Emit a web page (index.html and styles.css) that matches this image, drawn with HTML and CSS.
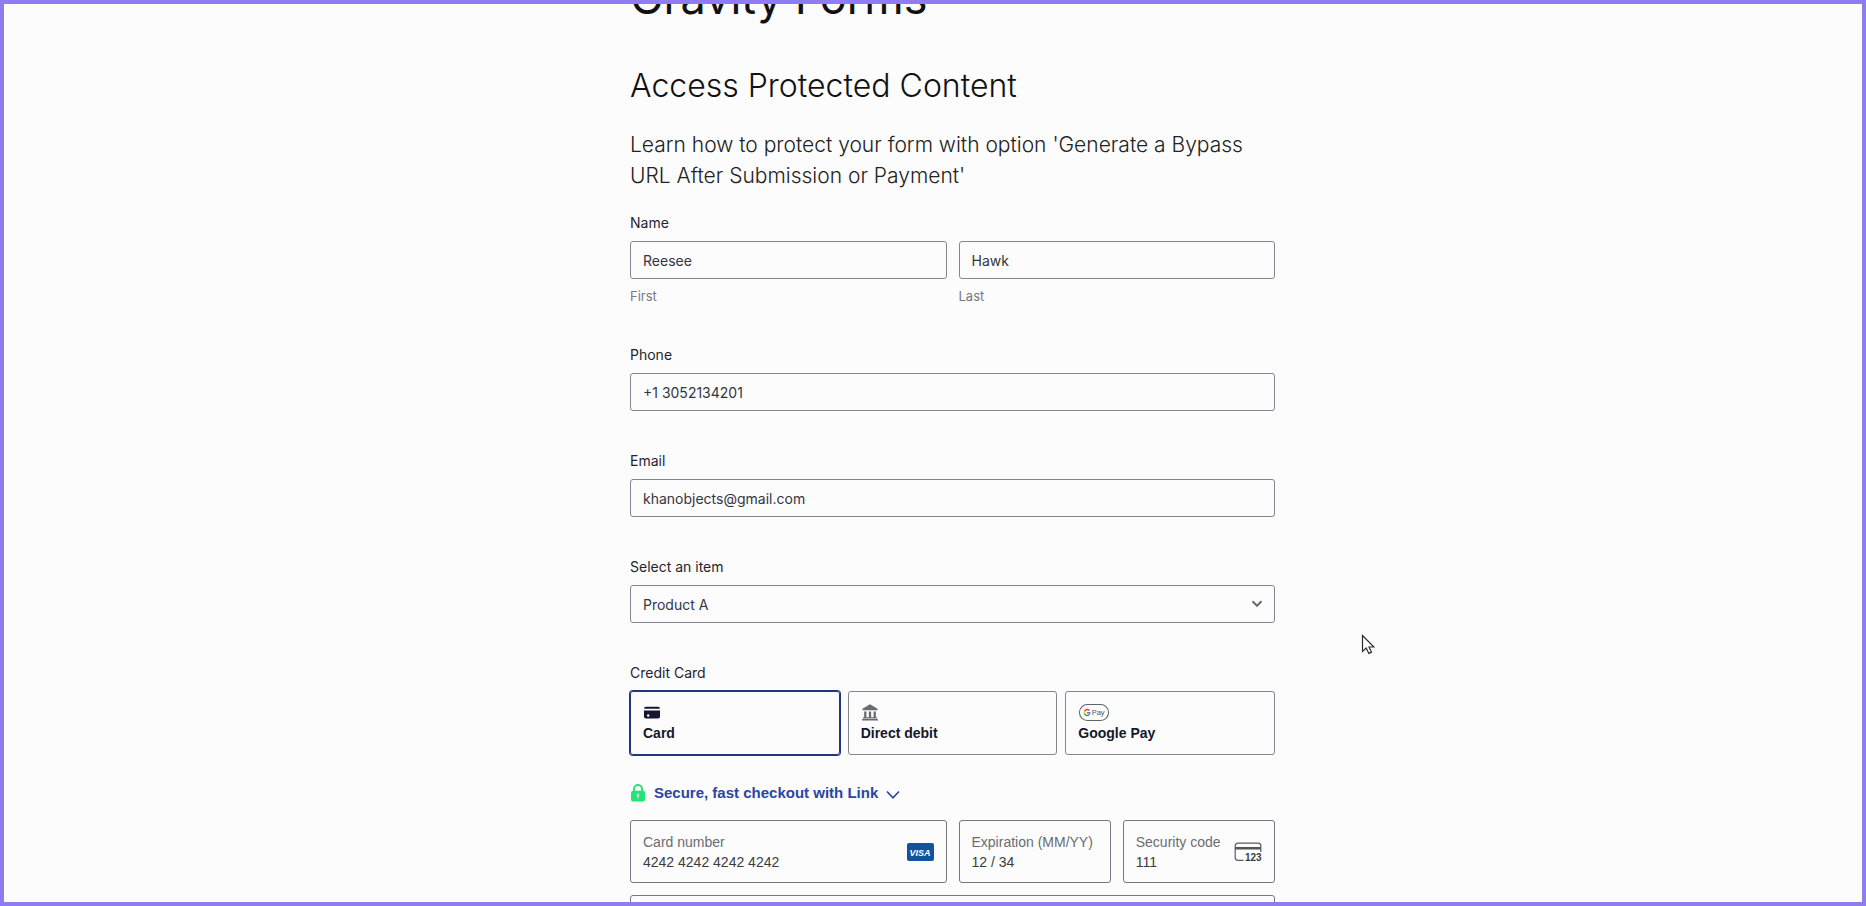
FILE: index.html
```
<!DOCTYPE html>
<html lang="en">

<head>
    <meta charset="UTF-8">
    <title>Gravity Forms</title>
    <link rel="stylesheet" href="styles.css">
</head>

<body>
    <div class="frame">
        <main class="content">
            <h1 class="page-title">Gravity Forms</h1>
            <form class="form">
                <h2 class="form-title">Access Protected Content</h2>
                <p class="form-desc">Learn how to protect your form with option 'Generate a Bypass URL After Submission or Payment'</p>

                <fieldset class="field">
                    <legend class="label">Name</legend>
                    <div class="name-row">
                        <div class="name-col">
                            <input class="control" id="first" type="text" value="Reesee">
                            <label class="sub-label" for="first">First</label>
                        </div>
                        <div class="name-col">
                            <input class="control" id="last" type="text" value="Hawk">
                            <label class="sub-label" for="last">Last</label>
                        </div>
                    </div>
                </fieldset>

                <div class="field">
                    <label class="label" for="phone">Phone</label>
                    <input class="control" id="phone" type="tel" value="+1 3052134201">
                </div>

                <div class="field">
                    <label class="label" for="email">Email</label>
                    <input class="control" id="email" type="email" value="khanobjects@gmail.com">
                </div>

                <div class="field">
                    <label class="label" for="item">Select an item</label>
                    <div class="select-wrap">
                        <select class="control" id="item">
                            <option>Product A</option>
                        </select>
                        <svg class="select-arrow" width="12" height="8" viewBox="0 0 12 8"><path d="M1.5 1.2 6 5.8l4.500-4.600" fill="none" stroke="#6a6c72" stroke-width="2"/></svg>
                    </div>
                </div>

                <fieldset class="field">
                    <legend class="label">Credit Card</legend>
                    <div class="methods">
                        <label class="method method-current">
                            <input class="method-radio" type="radio" name="method" checked>
                            <svg class="method-icon" width="18" height="18" viewBox="0 0 18 18">
                                <path d="M2.500 3h13A1.800 1.800 0 0 1 17.300 5H.7a1.800 1.800 0 0 1 1.800-2z" fill="#15172f"/>
                                <path d="M.5 7h17v6.200a2.200 2.200 0 0 1-2.200 2.200H2.700A2.200 2.200 0 0 1 .5 13.200z" fill="#15172f"/>
                                <circle cx="5" cy="12.200" r="1.300" fill="#fff"/>
                            </svg>
                            <span>Card</span>
                        </label>
                        <label class="method">
                            <input class="method-radio" type="radio" name="method">
                            <svg class="method-icon" width="18" height="18" viewBox="0 0 18 18" fill="#6a6c72">
                                <path d="M9 .3 17 5v1.600H1V5zM2.800 8h2.400v6.600H2.800zM7.800 8h2.400v6.600H7.800zM12.800 8h2.400v6.600h-2.400zM1.600 14h14.800v1.400H1.600zM.6 15.800h16.800v1.800H.6z"/>
                            </svg>
                            <span>Direct debit</span>
                        </label>
                        <label class="method">
                            <input class="method-radio" type="radio" name="method">
                            <svg class="method-icon" width="32" height="18" viewBox="0 0 32 18">
                                <rect x=".6" y=".6" width="30.800" height="16.800" rx="8.400" fill="#fff" stroke="#5f6368" stroke-width="1.100"/>
                                <g fill="none" stroke-width="1.500">
                                    <path d="M11 6.800A3 3 0 0 0 6 7.500" stroke="#ea4335"/>
                                    <path d="M6 7.500a3 3 0 0 0 0 3" stroke="#fbbc04"/>
                                    <path d="M6 10.500a3 3 0 0 0 4.600 1" stroke="#34a853"/>
                                    <path d="M10.600 11.500a3 3 0 0 0 .9-2.300H8.600" stroke="#4285f4"/>
                                </g>
                                <text class="gpay-text" x="13.500" y="12">Pay</text>
                            </svg>
                            <span>Google Pay</span>
                        </label>
                    </div>

                    <button class="link-btn" type="button">
                        <svg width="16" height="18" viewBox="0 0 16 18">
                            <path d="M4 8V5a4 4 0 0 1 8 0v3" fill="none" stroke="#33dd80" stroke-width="2"/>
                            <rect x="1" y="6.800" width="14" height="10.600" rx="2" fill="#22e477"/>
                            <path d="M8 9.500a1.500 1.500 0 0 1 .8 2.800v2H7.200v-2A1.500 1.500 0 0 1 8 9.500z" fill="#c9d3df"/>
                        </svg>
                        <span>Secure, fast checkout with Link</span>
                        <svg class="link-arrow" width="14" height="10" viewBox="0 0 14 10"><path d="M1 1.500l6 6.300 6-6.300" fill="none" stroke="#2b46a0" stroke-width="1.700"/></svg>
                    </button>

                    <div class="card-grid">
                        <div class="card-box card-number">
                            <div class="card-text">
                                <label for="number">Card number</label>
                                <input id="number" type="text" value="4242 4242 4242 4242">
                            </div>
                            <svg width="27" height="18" viewBox="0 0 27 18">
                                <rect width="27" height="18" rx="2" fill="#12539c"/>
                                <text class="visa-text" x="13" y="12.700" text-anchor="middle">VISA</text>
                            </svg>
                        </div>
                        <div class="card-box">
                            <div class="card-text">
                                <label for="expiry">Expiration (MM/YY)</label>
                                <input id="expiry" type="text" value="12 / 34">
                            </div>
                        </div>
                        <div class="card-box">
                            <div class="card-text">
                                <label for="cvc">Security code</label>
                                <input id="cvc" type="text" value="111">
                            </div>
                            <svg width="28" height="20" viewBox="0 0 28 20">
                                <path d="M9.500 18.300H4A2.800 2.800 0 0 1 1.200 15.500V4A2.800 2.800 0 0 1 4 1.200h20A2.800 2.800 0 0 1 26.800 4v6" fill="none" stroke="#5c5d61" stroke-width="1.200"/>
                                <path d="M1 5h26v2.500H1z" fill="#55565a"/>
                                <text class="cvc-text" x="11" y="18.800">123</text>
                            </svg>
                        </div>
                        <div class="card-box card-country"></div>
                    </div>
                </fieldset>
            </form>
        </main>
    </div>

    <svg class="cursor" width="14" height="21" viewBox="0 0 14 21"><path d="M1.500 1.500v16l3.700-3.400 2.600 5.300 2.700-1.300-2.500-5.100 4.700-.1z" fill="#fff" stroke="#2b2b2e" stroke-width="1.200"/></svg>
</body>

</html>
```
FILE: styles.css
```
* {
    box-sizing: border-box;
}

body {
    margin: 0;
    background: #fcfcfc;
    color: #111;
    font-family: Inter, "Liberation Sans", sans-serif;
}

.frame {
    height: 100vh;
    border: 4px solid #8f7cf0;
    padding-left: 39px;
    overflow: hidden;
}

.content {
    max-width: 645px;
    margin: 0 auto;
}

/* page is scrolled a little, title sits half above the edge */
.page-title {
    margin: -36px 0 0;
    font-size: 45px;
    line-height: 60px;
    font-weight: 400;
}

.form-title {
    margin: 38px 0 0;
    font-size: 32px;
    line-height: 40px;
    font-weight: 300;
}

.form-desc {
    margin: 23px 0 0;
    font-size: 21px;
    line-height: 31px;
    font-weight: 300;
    color: #222;
}

.field {
    margin: 0 0 36px;
    padding: 0;
    border: 0;
    min-width: 0;
}

.form-desc + .field {
    margin-top: 18px;
}

.label {
    display: block;
    padding: 0;
    margin-bottom: 4px;
    font-size: 14px;
    line-height: 28px;
    color: #1f2430;
}

.control {
    display: block;
    width: 100%;
    height: 38px;
    padding: 0 12px;
    border: 1px solid #85868c;
    border-radius: 3px;
    background: #fcfcfd;
    color: #33363f;
    font-family: inherit;
    font-size: 14px;
    appearance: none;
}

.name-row {
    display: grid;
    grid-template-columns: 1fr 1fr;
    gap: 12px;
}

.sub-label {
    display: block;
    margin-top: 8px;
    font-size: 13px;
    line-height: 18px;
    color: #777a80;
}

.select-wrap {
    position: relative;
}

.select-arrow {
    position: absolute;
    top: 15px;
    right: 12px;
    pointer-events: none;
}

.methods {
    display: grid;
    grid-template-columns: repeat(3, 1fr);
    gap: 8px;
    font-family: "Liberation Sans", Arial, sans-serif;
}

.method {
    position: relative;
    display: flex;
    flex-direction: column;
    align-items: flex-start;
    gap: 3px;
    height: 64px;
    padding: 12px;
    border: 1px solid #85868c;
    border-radius: 3px;
    color: #15172b;
    font-size: 14px;
    line-height: 18px;
    font-weight: bold;
}

.method-current {
    border-color: #21367f;
    box-shadow: 0 0 0 1px #21367f;
}

.method-radio {
    position: absolute;
    opacity: 0;
}

.gpay-text {
    font-size: 8px;
    font-weight: 400;
    fill: #4d5156;
}

.link-btn {
    display: flex;
    align-items: center;
    gap: 8px;
    margin: 28px 0 17px;
    padding: 0;
    border: 0;
    background: none;
    color: #2b46a0;
    font-family: "Liberation Sans", Arial, sans-serif;
    font-size: 15px;
    line-height: 20px;
    font-weight: bold;
}

.link-arrow {
    margin-top: 4px;
}

.card-grid {
    display: grid;
    grid-template-columns: repeat(4, minmax(0, 1fr));
    gap: 12px;
    font-family: "Liberation Sans", Arial, sans-serif;
}

.card-box {
    display: flex;
    align-items: center;
    height: 63px;
    padding: 0 12px;
    border: 1px solid #77787d;
    border-radius: 3px;
}

.card-box svg {
    flex: none;
}

.card-number {
    grid-column: span 2;
}

.card-country {
    grid-column: 1 / -1;
}

.card-text {
    flex: 1;
    min-width: 0;
    white-space: nowrap;
}

.card-text label {
    display: block;
    font-size: 14px;
    line-height: 20px;
    color: #6a6c72;
}

.card-text input {
    display: block;
    width: 100%;
    height: 20px;
    padding: 0;
    border: 0;
    background: none;
    color: #3a3c42;
    font-family: inherit;
    font-size: 14px;
}

.visa-text {
    font-size: 9px;
    font-weight: bold;
    font-style: italic;
    fill: #fff;
}

.cvc-text {
    font-size: 10px;
    font-weight: bold;
    fill: #3a3c42;
}

.cursor {
    position: absolute;
    top: 634px;
    left: 1361px;
    pointer-events: none;
}
```
